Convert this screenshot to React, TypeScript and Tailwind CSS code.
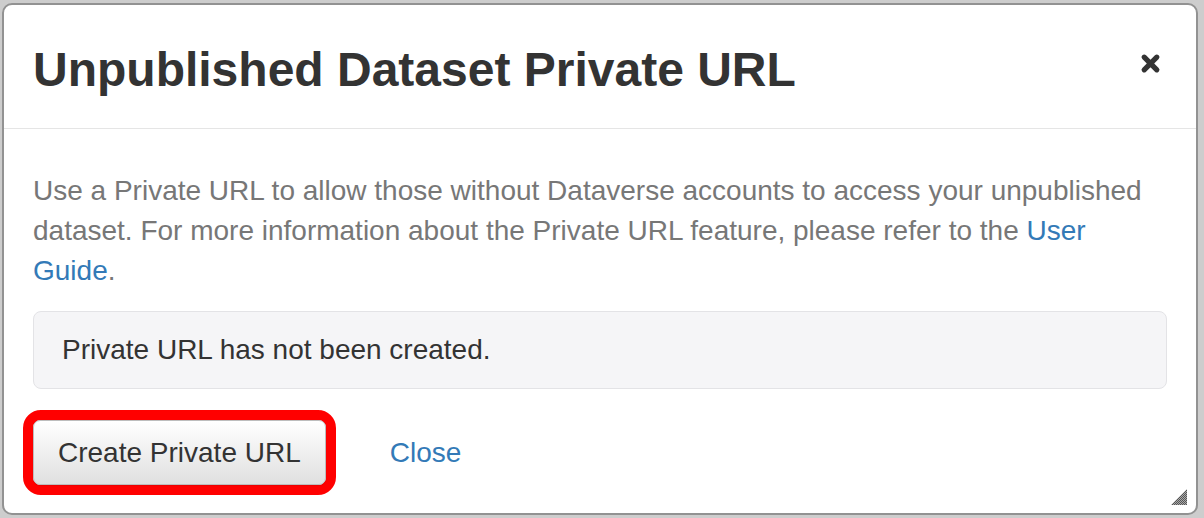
import React from 'react';

const FONT = { fontFamily: '"Liberation Sans", Arial, sans-serif' };

// small dotted triangle in the lower-right corner of the dialog
const ResizeGrip: React.FC = () => (
  <svg width="16" height="16" viewBox="0 0 16 16" className="absolute right-[9px] bottom-[8px]">
    <defs>
      <pattern id="dots" width="2" height="2" patternUnits="userSpaceOnUse">
        <rect width="1" height="1" fill="#555" />
        <rect x="1" y="1" width="1" height="1" fill="#555" />
        <rect x="1" width="1" height="1" fill="#aaa" />
        <rect y="1" width="1" height="1" fill="#aaa" />
      </pattern>
    </defs>
    <polygon points="16,0 16,16 0,16" fill="url(#dots)" />
  </svg>
);

const App: React.FC = () => {
  return (
    <div className="w-[1204px] h-[518px] bg-[#cdcdcd] pt-[3px] pl-[2px] pr-[6px] pb-[3px]" style={FONT}>
      <div className="relative h-full bg-white border-2 border-[#929292] rounded-[10px] flex flex-col">
        {/* header */}
        <div className="h-[124px] border-b border-[#e5e5e5] pl-[29px] pr-[35px] pt-[41px] flex items-start justify-between">
          <h4 className="text-[48px] leading-[48px] font-bold text-[#333]">Unpublished Dataset Private URL</h4>
          <button aria-label="Close" className="mt-[7px]">
            <svg width="21" height="21" viewBox="0 0 20 20">
              <path d="M4 4 L16 16 M16 4 L4 16" stroke="#333" strokeWidth="5" strokeLinecap="round" />
            </svg>
          </button>
        </div>

        {/* body */}
        <div className="px-[29px] pt-[42px]">
          <p className="text-[28px] leading-[40px] text-[#777] mb-[20px]">
            Use a Private URL to allow those without Dataverse accounts to access your unpublished dataset. For more
            information about the Private URL feature, please refer to the{' '}
            <a href="#" className="text-[#337ab7]">User Guide</a>.
          </p>

          <div className="bg-[#f5f5f7] border border-[#e3e3e6] rounded-[8px] px-[28px] py-[18px] text-[28px] leading-[40px] text-[#333]">
            Private URL has not been created.
          </div>

          <div className="flex items-center mt-[21px]">
            <div className="-ml-[10px] border-[10px] border-[#ff0000] rounded-[18px]">
              <button className="h-[65px] px-[24px] rounded-[7px] border border-[#bdbdbd] bg-gradient-to-b from-white to-[#e0e0e0] text-[28px] leading-[40px] text-[#333] shadow-[0_1px_1px_rgba(0,0,0,0.08)]">
                Create Private URL
              </button>
            </div>
            <a href="#" className="ml-[54px] text-[28px] leading-[40px] text-[#337ab7]">Close</a>
          </div>
        </div>

        <ResizeGrip />
      </div>
    </div>
  );
};

export default App;
